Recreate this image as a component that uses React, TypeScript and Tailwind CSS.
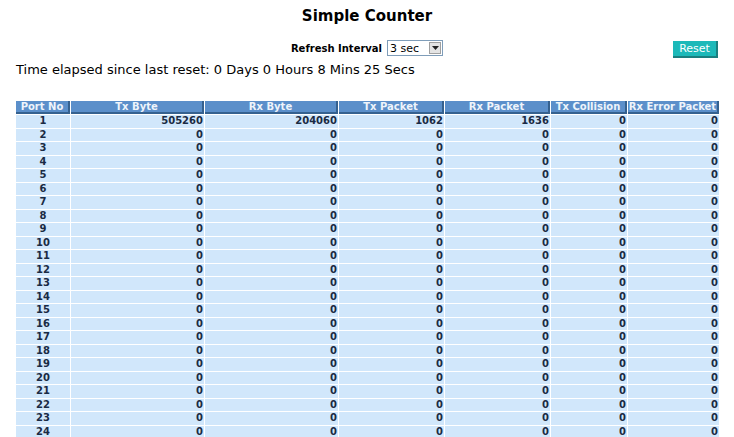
import React from 'react';

const columns = [
  { label: 'Port No', width: 'w-[54px]' },
  { label: 'Tx Byte', width: 'w-[133px]' },
  { label: 'Rx Byte', width: 'w-[133px]' },
  { label: 'Tx Packet', width: 'w-[105px]' },
  { label: 'Rx Packet', width: 'w-[105px]' },
  { label: 'Tx Collision', width: 'w-[76px]' },
  { label: 'Rx Error Packet', width: 'w-[91px]' },
];

const rows = Array.from({ length: 24 }, (_, i) =>
  i === 0 ? [1, 505260, 204060, 1062, 1636, 0, 0] : [i + 1, 0, 0, 0, 0, 0, 0]
);

function IntervalSelect() {
  return (
    <div className="flex h-[16px] items-center border border-[#7f9db9] bg-white">
      <span className="pl-[2px] pr-[10px] text-[11px] leading-none text-black">3 sec</span>
      <span className="mr-px flex h-[12px] w-[12px] items-center justify-center border border-[#a0a0a0] bg-[#e4e4e4]">
        <svg width="7" height="4" viewBox="0 0 7 4">
          <path d="M0 0h7L3.5 4z" fill="#222" />
        </svg>
      </span>
    </div>
  );
}

export default function App() {
  return (
    <div className="h-[437px] w-[734px] overflow-hidden bg-white font-['DejaVu_Sans',Verdana,sans-serif] text-black">
      <h1 className="pt-[7px] text-center text-[15px] font-bold leading-[18px]">Simple Counter</h1>

      <div className="relative mt-[15px] flex h-[16px] items-center justify-center gap-[5px]">
        <span className="text-[10px] font-bold">Refresh Interval</span>
        <IntervalSelect />
        <button className="absolute right-[16px] top-[1px] h-[17px] w-[45px] border-r-2 border-b-2 border-r-[#1a7f7f] border-b-[#1a7f7f] bg-[#1cb9b9] p-0 text-[11px] leading-none text-white">
          Reset
        </button>
      </div>

      <p className="ml-[16px] mt-[6px] text-[13px] leading-[16px]">
        Time elapsed since last reset: 0 Days 0 Hours 8 Mins 25 Secs
      </p>

      <table className="ml-[15px] mt-[22px] w-[705px] border-separate border-spacing-[1px] text-[10px] font-bold">
        <thead>
          <tr>
            {columns.map((c) => (
              <th
                key={c.label}
                className={`${c.width} h-[13px] border-r-2 border-b-2 border-r-[#35618f] border-b-[#35618f] bg-[#5b8fca] p-0 text-center leading-none text-[#eef4fb]`}
              >
                {c.label}
              </th>
            ))}
          </tr>
        </thead>
        <tbody>
          {rows.map((r) => (
            <tr key={r[0]}>
              {r.map((v, j) => (
                <td
                  key={j}
                  className={`h-[12.5px] bg-[#d1e7fb] p-0 leading-none text-[#1a2b44] ${j === 0 ? 'text-center' : 'pr-[1px] text-right'}`}
                >
                  {v}
                </td>
              ))}
            </tr>
          ))}
        </tbody>
      </table>
    </div>
  );
}
